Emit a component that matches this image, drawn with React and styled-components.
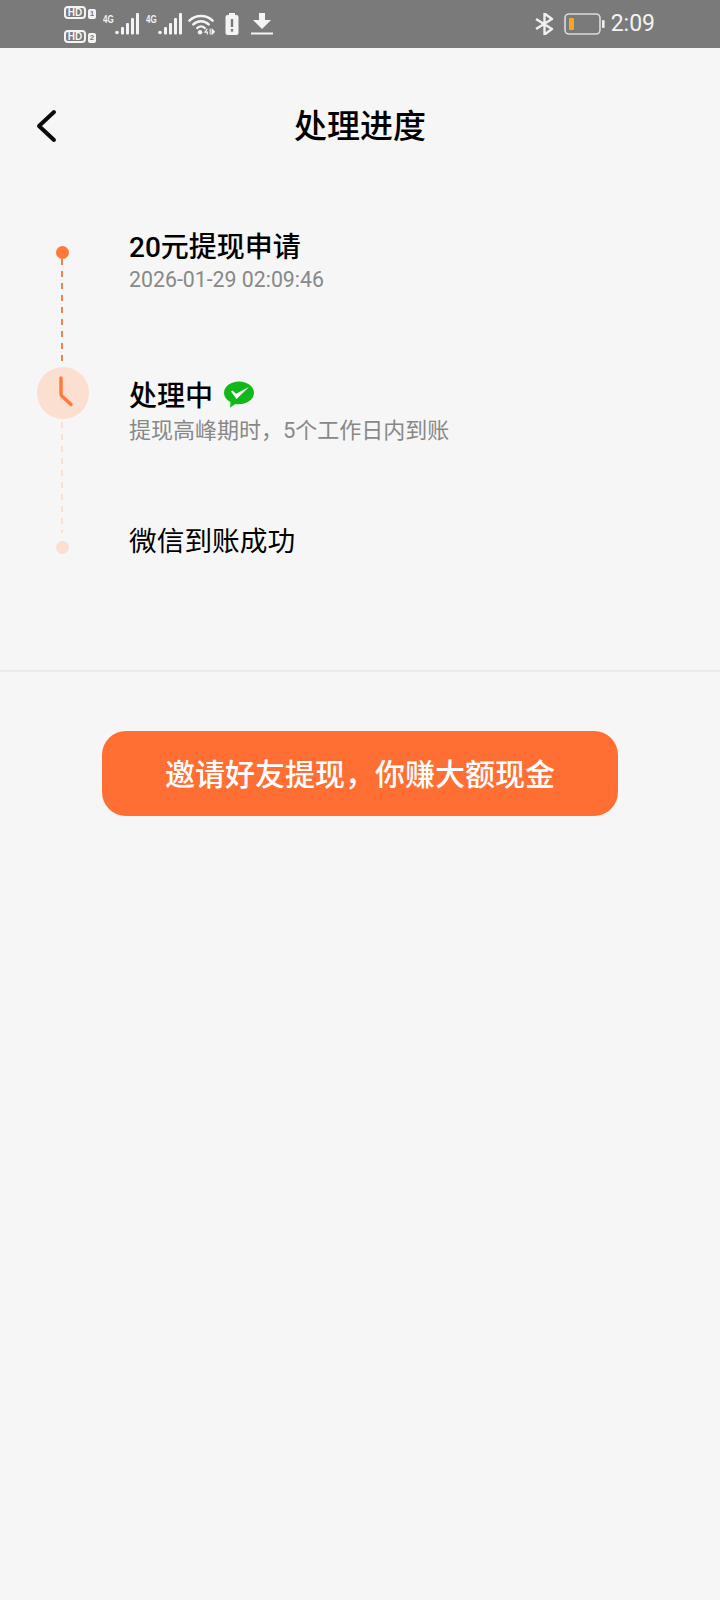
import React from 'react'
import styled, { createGlobalStyle } from 'styled-components'

const GlobalStyle = createGlobalStyle`
  html, body {
    margin: 0;
    padding: 0;
    background: #f6f6f6;
  }
  body {
    font-family: Roboto, "Noto Sans CJK SC", sans-serif;
  }
`

function Signal() {
  return (
    <SignalWrap>
      <NetLabel>4G</NetLabel>
      <svg width="24" height="22" viewBox="0 0 24 22">
        <circle cx="2" cy="19.500" r="1.800" fill="#f4f4f4" />
        <rect x="6" y="14" width="3" height="7.500" rx="1" fill="#f4f4f4" />
        <rect x="11" y="10" width="3" height="11.500" rx="1" fill="#f4f4f4" />
        <rect x="16" y="5" width="3" height="16.500" rx="1" fill="#f4f4f4" />
        <rect x="21" y="0" width="3" height="21.500" rx="1" fill="#f4f4f4" />
      </svg>
    </SignalWrap>
  )
}

function App() {
  return (
    <Page>
      <GlobalStyle />
      <StatusBar>
        <StatusGroup>
          <SimColumn>
            <SimRow><HdBadge>HD</HdBadge><SimNumber>1</SimNumber></SimRow>
            <SimRow><HdBadge>HD</HdBadge><SimNumber>2</SimNumber></SimRow>
          </SimColumn>
          <Signal />
          <Signal />
          <WifiIcon width="27" height="22" viewBox="0 0 28 22" fill="none">
            <path d="M1.500 7.500C8 1 19 1 25.500 7.500" stroke="#f4f4f4" strokeWidth="2.600" strokeLinecap="round" />
            <path d="M5.500 11.500C10 7 17 7 21.500 11.500" stroke="#f4f4f4" strokeWidth="2.600" strokeLinecap="round" />
            <path d="M9.500 15.200C12 13 15 13 17.500 15.200" stroke="#f4f4f4" strokeWidth="2.400" strokeLinecap="round" />
            <circle cx="12.500" cy="19.500" r="2.300" fill="#f4f4f4" />
            <path d="M20 16l-2.500 3.500h2.500V22" stroke="#f4f4f4" strokeWidth="1.200" />
            <path d="M23 16v6M25 16.500l2.500 2.500-2.500 2.500z" stroke="#f4f4f4" strokeWidth="1.200" fill="#f4f4f4" />
          </WifiIcon>
          <BatterySaver>
            <svg width="14" height="22" viewBox="0 0 14 22">
              <rect x="4" y="0" width="6" height="2" fill="#f4f4f4" />
              <rect x="0.500" y="2" width="13" height="20" rx="2" fill="#f4f4f4" />
              <rect x="5.800" y="6" width="2.400" height="8" fill="#7a7a7a" />
              <rect x="5.800" y="16" width="2.400" height="2.600" fill="#7a7a7a" />
            </svg>
          </BatterySaver>
          <svg width="22" height="22" viewBox="0 0 22 22">
            <path d="M8 0h6v7h6l-9 9-9-9h6z" fill="#f4f4f4" />
            <rect x="0" y="19.500" width="22" height="2" fill="#f4f4f4" />
          </svg>
        </StatusGroup>
        <StatusRight>
          <svg width="22" height="22" viewBox="0 0 22 22" fill="none">
            <path d="M2 6l16 10-7.500 5.500V0.500L18 6 2 16" stroke="#f0f0f0" strokeWidth="2.400" strokeLinejoin="round" />
          </svg>
          <svg width="41" height="22" viewBox="0 0 41 22" fill="none">
            <rect x="1" y="1" width="35" height="20" rx="4" stroke="#dcdcdc" strokeWidth="1.600" />
            <rect x="5" y="5" width="5" height="12" rx="1" fill="#f5a623" />
            <rect x="38" y="7" width="2.600" height="8" rx="1" fill="#f0f0f0" />
          </svg>
          <Clock>2:09</Clock>
        </StatusRight>
      </StatusBar>

      <Header>
        <BackButton>
          <svg width="24" height="36" viewBox="0 0 24 36" fill="none">
            <path d="M20 4L5 18l15 14" stroke="#0b0b0b" strokeWidth="4" strokeLinecap="round" strokeLinejoin="round" />
          </svg>
        </BackButton>
        <Title>处理进度</Title>
      </Header>

      <Timeline>
        <Step $height={135}>
          <Rail $top={14}>
            <Dot $color="#ff7a38" />
            <Dashes $color="#e8844f" />
          </Rail>
          <StepBody $top={1}>
            <StepTitle $strong>20元提现申请</StepTitle>
            <StepDate>2026-01-29 02:09:46</StepDate>
          </StepBody>
        </Step>

        <Step $height={174}>
          <Rail>
            <ClockCircle>
              <svg width="24" height="38" viewBox="0 0 24 38" fill="none">
                <path d="M10 4v15.500q0 1.500 1 2.500l9 8.500" stroke="#ff7a38" strokeWidth="3.400" strokeLinecap="round" strokeLinejoin="round" />
              </svg>
            </ClockCircle>
            <Dashes $color="#fbdfd0" $gap />
          </Rail>
          <StepBody $top={14}>
            <TitleRow>
              <StepTitle $strong>处理中</StepTitle>
              <WechatIcon width="32" height="27" viewBox="0 0 32 27">
                <path d="M16 .5C7.700.5 1 5.500 1 11.800c0 3.900 2.600 7.300 6.500 9.300l-.5 5.400 5.500-3.600c1.100.2 2.300.3 3.500.3 8.300 0 15-5.100 15-11.400S24.300.5 16 .5z" fill="#11b81a" />
                <path d="M8 10.500l1.500-1 3.500 3.300L26 6 13.500 18z" fill="#fff" />
              </WechatIcon>
            </TitleRow>
            <StepNote>提现高峰期时，5个工作日内到账</StepNote>
          </StepBody>
        </Step>

        <Step>
          <Rail>
            <Dot $color="#fbdfd0" />
          </Rail>
          <StepBody $top={-14}>
            <PlainTitle>微信到账成功</PlainTitle>
          </StepBody>
        </Step>
      </Timeline>

      <Divider />

      <ActionRow>
        <InviteButton><span>邀请好友提现，你赚大额现金</span></InviteButton>
      </ActionRow>
    </Page>
  )
}

export default App

const Page = styled.div`
  min-height: 1600px;
  background: #f6f6f6;
`

const StatusBar = styled.div`
  height: 48px;
  background: #7a7a7a;
  display: flex;
  justify-content: space-between;
  padding: 0 65px 0 64px;
  box-sizing: border-box;
`

const StatusGroup = styled.div`
  display: flex;
  align-items: center;
  gap: 9px;
  height: 48px;
`

const StatusRight = styled(StatusGroup)`
  gap: 8px;
`

const SimColumn = styled.div`
  display: flex;
  flex-direction: column;
  gap: 11px;
  width: 32px;
  margin-right: -2px;
`

const SimRow = styled.div`
  display: flex;
  align-items: flex-end;
  gap: 2px;
`

const HdBadge = styled.span`
  width: 22px;
  height: 13px;
  box-sizing: border-box;
  border: 2px solid #f4f4f4;
  border-radius: 4px;
  color: #f4f4f4;
  font: 700 10px/9px "Liberation Sans", sans-serif;
  text-align: center;
`

const SimNumber = styled.span`
  width: 8px;
  height: 10px;
  border-radius: 2px;
  background: #f4f4f4;
  color: #7a7a7a;
  font: 700 8px/10px "Liberation Sans", sans-serif;
  text-align: center;
`

const SignalWrap = styled.div`
  display: flex;
  align-items: flex-start;
  margin-right: -2px;
`

const NetLabel = styled.span`
  width: 12px;
  font: 700 10px/12px "Liberation Sans", sans-serif;
  color: #f4f4f4;
  margin-top: 1px;
  white-space: nowrap;
  transform: scaleX(0.8);
  transform-origin: left;
`

const WifiIcon = styled.svg`
  margin-left: -1px;
`

const BatterySaver = styled.div`
  display: flex;
  margin: 0 3px 0 1px;
`

const Clock = styled.span`
  font-size: 23px;
  margin-left: -2px;
  color: #f2f2f2;
  line-height: 26px;
`

const Header = styled.div`
  height: 156px;
  display: flex;
  align-items: center;
  justify-content: center;
  position: relative;
`

const BackButton = styled.div`
  position: absolute;
  left: 34px;
  top: 60px;
  display: flex;
`

const Title = styled.div`
  font-size: 33px;
  font-weight: 500;
  color: #000;
  margin-top: -4px;
`

const Timeline = styled.div`
  padding: 28px 0 0 36px;
  height: 466px;
  box-sizing: border-box;
`

const Step = styled.div`
  display: flex;
  height: ${props => (props.$height ? `${props.$height}px` : 'auto')};
`

const Rail = styled.div`
  width: 52px;
  flex: none;
  display: flex;
  flex-direction: column;
  align-items: center;
  padding-top: ${props => props.$top || 0}px;
  box-sizing: border-box;
`

const Dot = styled.div`
  width: 13px;
  height: 13px;
  border-radius: 50%;
  background: ${props => props.$color};
  flex: none;
`

const Dashes = styled.div`
  width: 2px;
  flex: 1;
  margin-top: ${props => (props.$gap ? 3 : 0)}px;
  margin-bottom: ${props => (props.$gap ? 8 : 2)}px;
  background: repeating-linear-gradient(
    to bottom,
    ${props => props.$color} 0 6px,
    transparent 6px 12px
  );
`

const ClockCircle = styled.div`
  width: 52px;
  height: 52px;
  margin-left: 2px;
  border-radius: 50%;
  background: #fbdfd0;
  display: flex;
  align-items: center;
  justify-content: center;
  flex: none;
`

const StepBody = styled.div`
  margin-left: 41px;
  margin-top: ${props => props.$top || 0}px;
`

const TitleRow = styled.div`
  display: flex;
  align-items: center;
  gap: 10px;
`

const WechatIcon = styled.svg`
  margin-bottom: 5px;
`

const StepTitle = styled.div`
  font-size: 28px;
  line-height: 30px;
  color: #000;
  font-weight: ${props => (props.$strong ? 500 : 400)};
`

const PlainTitle = styled(StepTitle)`
  font-size: 27.7px;
`

const StepNote = styled.div`
  font-size: 22px;
  line-height: 30px;
  margin-top: 3px;
  color: #888;
`

const StepDate = styled(StepNote)`
  font-size: 21.3px;
  margin-top: 2px;
`

const Divider = styled.div`
  height: 2px;
  background: #ebebeb;
`

const ActionRow = styled.div`
  display: flex;
  justify-content: center;
  padding-top: 59px;
`

const InviteButton = styled.div`
  width: 516px;
  height: 85px;
  border-radius: 24px;
  background: #ff6f33;
  color: #fff;
  font-size: 30px;
  font-weight: 500;
  display: flex;
  align-items: center;
  justify-content: center;
  span {
    margin-top: -4px;
  }
`
